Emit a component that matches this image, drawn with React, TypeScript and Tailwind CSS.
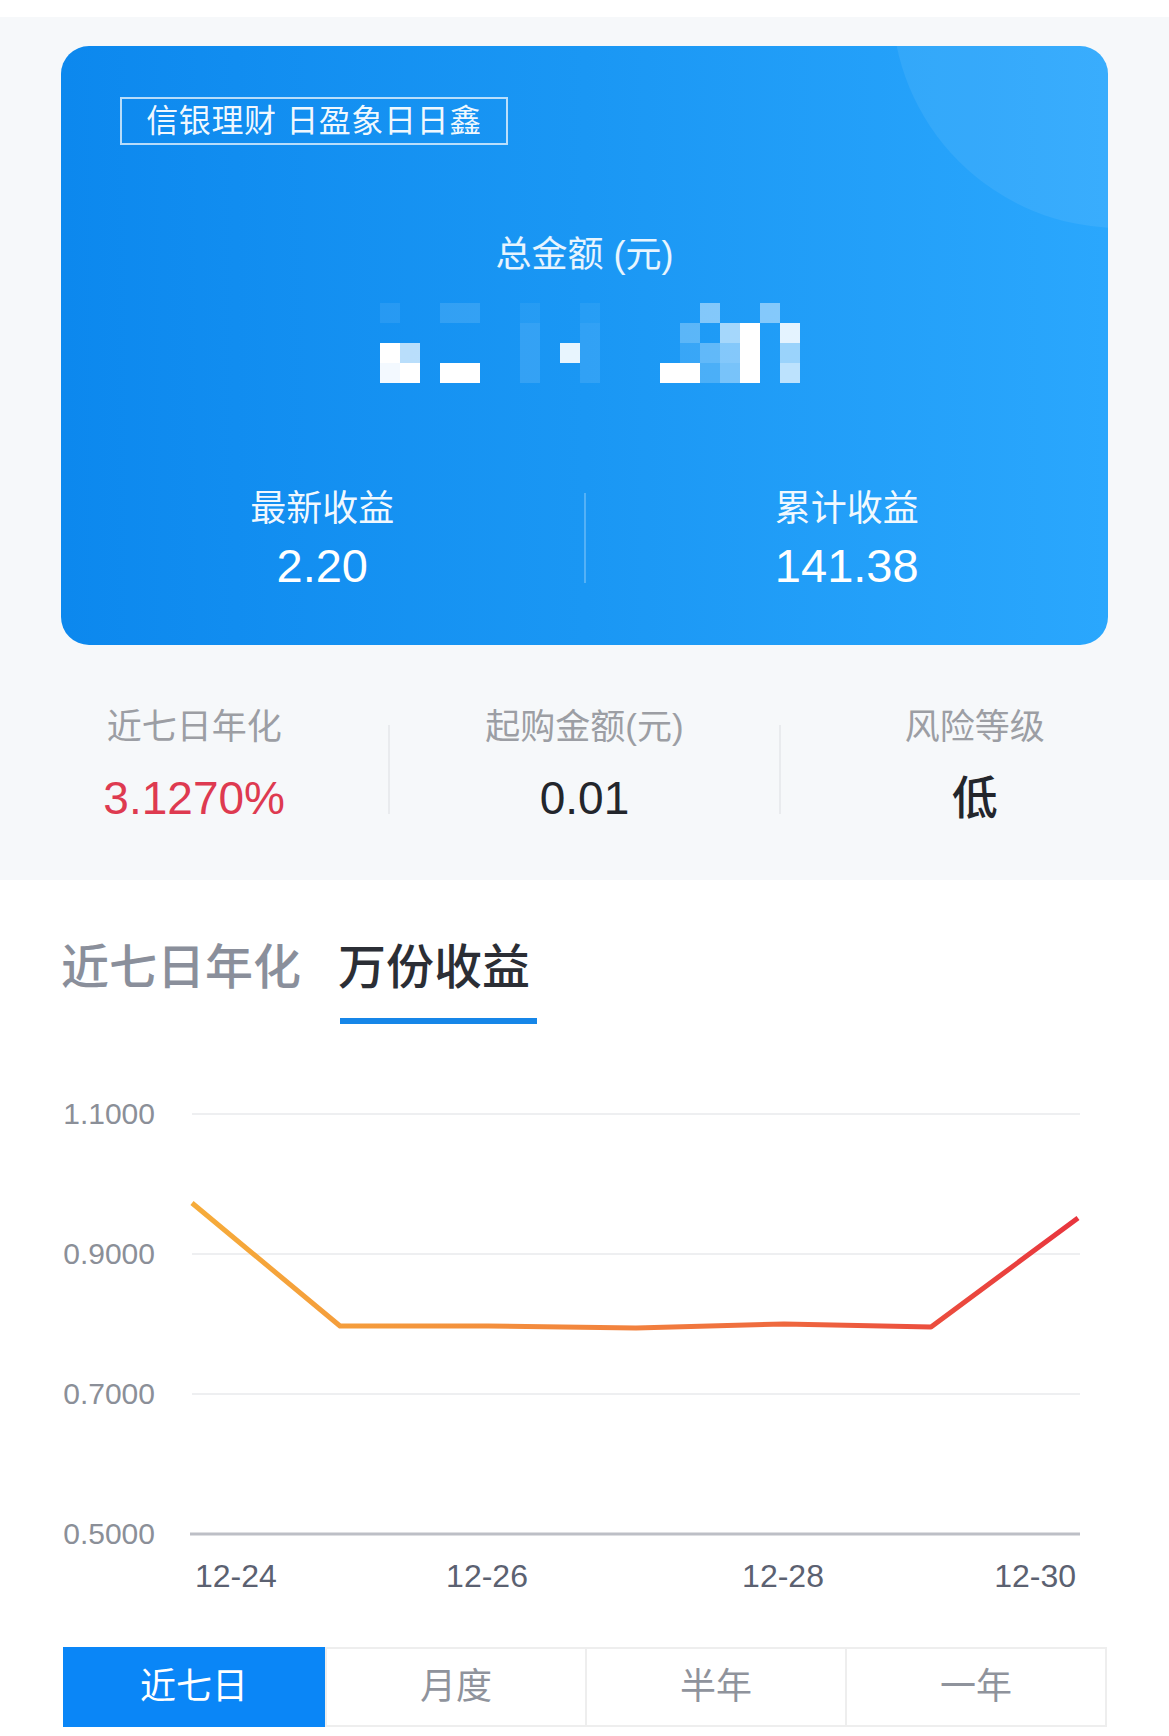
import { Fragment } from 'react'

const mosaic: number[][] = [
  [0.08, 0, 0, 0.12, 0.12, 0, 0, 0.06, 0, 0, 0.06, 0, 0, 0, 0, 0, 0.45, 0, 0, 0.45, 0],
  [0, 0, 0, 0, 0, 0, 0, 0.12, 0, 0, 0.1, 0, 0, 0, 0, 0.28, 0, 0.6, 1, 0, 0.88],
  [1, 0.7, 0, 0, 0, 0, 0, 0.12, 0, 0.9, 0.1, 0, 0, 0, 0, 0.12, 0.3, 0.45, 1, 0, 0.55],
  [0.95, 1, 0, 1, 1, 0, 0, 0.12, 0, 0, 0.1, 0, 0, 0, 1, 1, 0.2, 0.4, 1, 0, 0.7],
]

const stats = [
  { label: '近七日年化', value: '3.1270%', color: 'text-[#de3a50]' },
  { label: '起购金额(元)', value: '0.01', color: 'text-[#23262c]' },
  { label: '风险等级', value: '低', color: 'text-[#23262c]' },
]

const periods = ['近七日', '月度', '半年', '一年']

// chart points, page x / y relative to svg top (1024)
const points: [number, number][] = [
  [192, 179],
  [340, 302],
  [488, 302],
  [636, 304],
  [784, 300],
  [931, 303],
  [1078, 194],
]

function Mosaic() {
  return (
    <div className="ml-[319px] mt-[28px] flex flex-col">
      {mosaic.map((row, r) => (
        <div key={r} className="flex">
          {row.map((a, c) => (
            <div key={c} className="h-[20px] w-[20px] bg-white" style={{ opacity: a }} />
          ))}
        </div>
      ))}
    </div>
  )
}

function Card() {
  return (
    <div className="relative h-[599px] overflow-hidden rounded-[28px] bg-gradient-to-r from-[#0c88ee] via-[#1a97f4] to-[#2aa7fd]">
      <div className="absolute left-[831px] top-[-274px] h-[456px] w-[456px] rounded-full bg-white/[0.07]" />
      <div className="relative flex flex-col">
        <div className="ml-[59px] mt-[51px] flex h-[48px] w-[388px] items-center justify-center border-2 border-white/70 text-[32px] leading-none tracking-[0.6px] text-white/95">
          信银理财 日盈象日日鑫
        </div>
        <div className="mt-[90px] text-center text-[36px] leading-[40px] text-white/90">总金额 (元)</div>
        <Mosaic />
        <div className="mt-[104px] flex items-start">
          <div className="flex flex-1 flex-col items-center text-white">
            <div className="text-[36px] leading-[44px] text-white/95">最新收益</div>
            <div className="mt-[9px] text-[47px] leading-[52px]">2.20</div>
          </div>
          <div className="mt-[6px] h-[90px] w-[2px] bg-white/25" />
          <div className="flex flex-1 flex-col items-center text-white">
            <div className="text-[36px] leading-[44px] text-white/95">累计收益</div>
            <div className="mt-[9px] text-[47px] leading-[52px]">141.38</div>
          </div>
        </div>
      </div>
    </div>
  )
}

function Stats() {
  return (
    <div className="flex items-start pb-[56px] pt-[62px]">
      {stats.map((s, i) => (
        <Fragment key={s.label}>
          {i > 0 && <div className="mt-[18px] h-[89px] w-[2px] bg-[#e9ebee]" />}
          <div className="flex flex-1 flex-col items-center">
            <div className="text-[35px] leading-[40px] text-[#9c9ea4]">{s.label}</div>
            <div className={`mt-[25px] text-[46px] font-medium leading-[52px] ${s.color}`}>{s.value}</div>
          </div>
        </Fragment>
      ))}
    </div>
  )
}

function Chart() {
  const grid = [90, 230, 370]
  const yLabels = ['1.1000', '0.9000', '0.7000', '0.5000']
  const path = points.map((p) => p.join(',')).join(' ')
  return (
    <svg width={1169} height={623} className="block">
      <defs>
        <linearGradient id="line" x1="192" y1="0" x2="1078" y2="0" gradientUnits="userSpaceOnUse">
          <stop offset="0" stopColor="#f6ac3a" />
          <stop offset="0.5" stopColor="#f2813e" />
          <stop offset="1" stopColor="#e8353e" />
        </linearGradient>
      </defs>
      {grid.map((y) => (
        <line key={y} x1={192} x2={1080} y1={y} y2={y} stroke="#eeeff1" strokeWidth={2} />
      ))}
      <line x1={190} x2={1080} y1={510} y2={510} stroke="#bdbfc6" strokeWidth={3} />
      {yLabels.map((t, i) => (
        <text
          key={t}
          x={155}
          y={100 + i * 140}
          textAnchor="end"
          fontSize={30}
          fill="#8b8f98"
          fontFamily="Liberation Sans, sans-serif"
        >
          {t}
        </text>
      ))}
      <g fontSize={32} fill="#5b6171" fontFamily="Liberation Sans, sans-serif">
        <text x={195} y={563}>12-24</text>
        <text x={487} y={563} textAnchor="middle">12-26</text>
        <text x={783} y={563} textAnchor="middle">12-28</text>
        <text x={1076} y={563} textAnchor="end">12-30</text>
      </g>
      <polyline points={path} fill="none" stroke="url(#line)" strokeWidth={5} strokeLinejoin="round" />
    </svg>
  )
}

export default function App() {
  return (
    <div className="min-h-[1736px] w-[1169px] bg-white font-['Liberation_Sans','Noto_Sans_CJK_SC',sans-serif]">
      <div className="h-[17px] bg-white" />
      <div className="bg-[#f6f8fa]">
        <div className="px-[61px] pt-[29px]">
          <Card />
        </div>
        <Stats />
      </div>
      <div className="flex items-start gap-[37px] pl-[61px] pt-[60px]">
        <div className="text-[48px] font-medium leading-[56px] text-[#8a8f9b]">近七日年化</div>
        <div className="flex flex-col">
          <div className="text-[48px] font-medium leading-[56px] text-[#2b2e35]">万份收益</div>
          <div className="ml-[2px] mt-[22px] h-[6px] w-[197px] bg-[#1686e8]" />
        </div>
      </div>
      <Chart />
      <div className="ml-[63px] grid h-[80px] w-[1044px] grid-cols-4 border-2 border-[#eeeeee]">
        {periods.map((p, i) => (
          <div
            key={p}
            className={`flex items-center justify-center text-[36px] ${
              i === 0 ? '-my-[2px] -ml-[2px] bg-[#0a86f7] text-white' : 'border-l-2 border-[#eeeeee] text-[#8f939c]'
            } ${i === 1 ? 'border-l-0' : ''}`}
          >
            {p}
          </div>
        ))}
      </div>
    </div>
  )
}
